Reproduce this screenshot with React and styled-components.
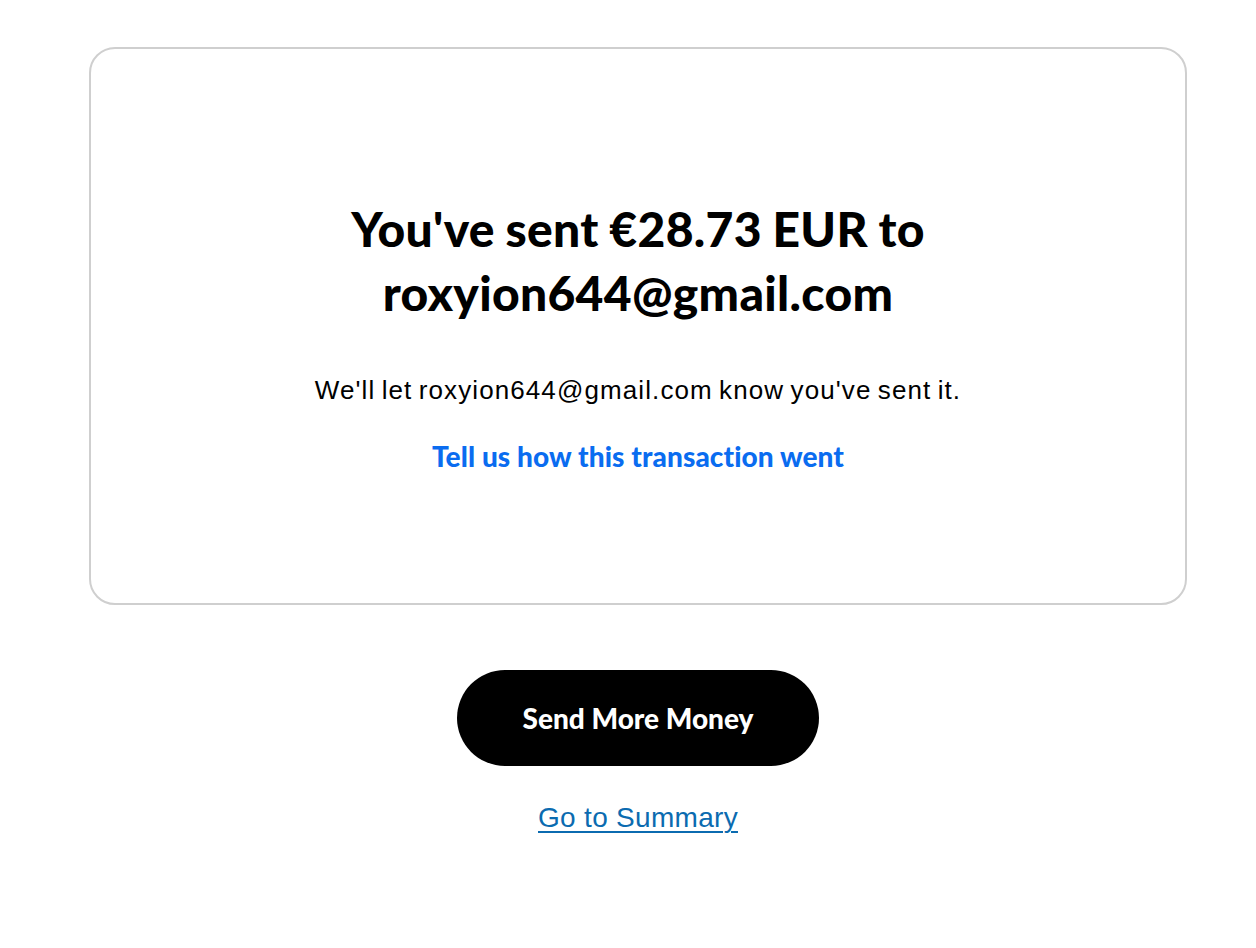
import React from 'react'
import styled, { createGlobalStyle } from 'styled-components'

const GlobalStyle = createGlobalStyle`
  html, body {
    margin: 0;
    padding: 0;
    background: #fff;
  }
  body {
    font-family: "Liberation Sans", Arial, sans-serif;
    color: #000;
  }
`

export default function App () {
  return (
    <>
      <GlobalStyle />
      <Page>
        <Card>
          <Title>
            You've sent €28.73 EUR to
            <br />
            roxyion644@gmail.com
          </Title>
          <Message>We'll let roxyion644@gmail.com know you've sent it.</Message>
          <FeedbackLink href='#'>Tell us how this transaction went</FeedbackLink>
        </Card>
        <Actions>
          <PrimaryButton type='button'>Send More Money</PrimaryButton>
          <SummaryLink href='#'>Go to Summary</SummaryLink>
        </Actions>
      </Page>
    </>
  )
}

const Page = styled.div`
  padding: 47px 69px 0 89px;
  display: flex;
  flex-direction: column;
`

const Card = styled.div`
  box-sizing: border-box;
  height: 558px;
  border: 2px solid #cfcfcf;
  border-radius: 26px;
  display: flex;
  flex-direction: column;
  align-items: center;
  padding-top: 148px;
`

const Title = styled.h1`
  margin: 0;
  font-family: Lato, sans-serif;
  font-weight: 900;
  font-size: 48px;
  line-height: 64px;
  text-align: center;
  letter-spacing: 0.3px;
  word-spacing: -1px;
`

const Message = styled.p`
  margin: 49px 0 0;
  font-size: 26px;
  line-height: 32px;
  letter-spacing: 1.1px;
  word-spacing: -2px;
`

const FeedbackLink = styled.a`
  margin-top: 34px;
  font-family: Lato, sans-serif;
  font-weight: 900;
  font-size: 28px;
  line-height: 32px;
  color: #0a6cf0;
  text-decoration: none;
  letter-spacing: 0.1px;
`

const Actions = styled.div`
  display: flex;
  flex-direction: column;
  align-items: center;
  margin-top: 65px;
`

const PrimaryButton = styled.button`
  width: 362px;
  height: 96px;
  border: none;
  border-radius: 48px;
  background: #000;
  color: #fff;
  font-family: Lato, sans-serif;
  font-weight: 900;
  font-size: 28px;
  cursor: pointer;
`

const SummaryLink = styled.a`
  margin-top: 36px;
  font-size: 28px;
  line-height: 32px;
  letter-spacing: 0.3px;
  color: #0b6bb0;
  text-decoration: underline;
  text-underline-offset: 4px;
  text-decoration-thickness: 2px;
`
